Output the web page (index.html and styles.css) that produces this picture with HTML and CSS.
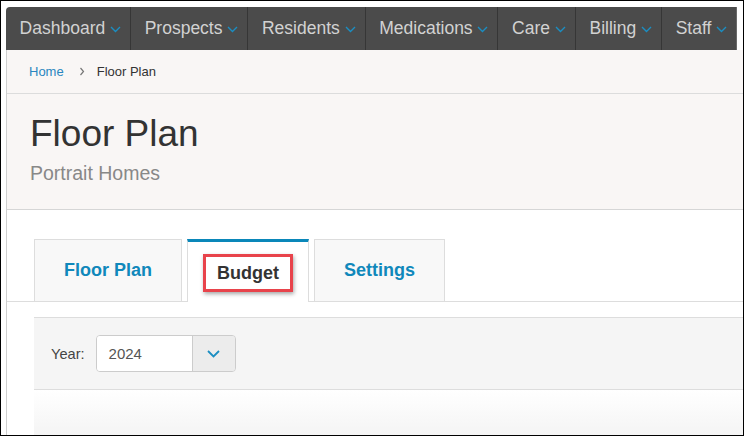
FILE: index.html
```html
<!DOCTYPE html>
<html>
<head>
    <meta charset="utf-8">
    <title>Floor Plan</title>
    <link rel="stylesheet" href="styles.css">
</head>
<body>
    <div class="tela">
        <ul class="menu">
            <li>Dashboard <svg class="seta" width="11" height="7" viewBox="0 0 11 7"><path d="M1 1l4.5 4.5L10 1"/></svg></li>
            <li>Prospects <svg class="seta" width="11" height="7" viewBox="0 0 11 7"><path d="M1 1l4.5 4.5L10 1"/></svg></li>
            <li>Residents <svg class="seta" width="11" height="7" viewBox="0 0 11 7"><path d="M1 1l4.5 4.5L10 1"/></svg></li>
            <li>Medications <svg class="seta" width="11" height="7" viewBox="0 0 11 7"><path d="M1 1l4.5 4.5L10 1"/></svg></li>
            <li>Care <svg class="seta" width="11" height="7" viewBox="0 0 11 7"><path d="M1 1l4.5 4.5L10 1"/></svg></li>
            <li>Billing <svg class="seta" width="11" height="7" viewBox="0 0 11 7"><path d="M1 1l4.5 4.5L10 1"/></svg></li>
            <li>Staff <svg class="seta" width="11" height="7" viewBox="0 0 11 7"><path d="M1 1l4.5 4.5L10 1"/></svg></li>
        </ul>

        <div class="pagina">
            <div class="trilha">
                <a class="trilha-link">Home</a>
                <svg class="trilha-seta" width="6" height="9" viewBox="0 0 6 9"><path d="M1.5 1l3 3.5-3 3.5"/></svg>
                <span>Floor Plan</span>
            </div>

            <div class="cabecalho">
                <h1 class="titulo">Floor Plan</h1>
                <div class="subtitulo">Portrait Homes</div>
            </div>

            <ul class="abas">
                <li class="aba">Floor Plan</li>
                <li class="aba ativa"><span class="destaque">Budget</span></li>
                <li class="aba">Settings</li>
            </ul>

            <div class="filtro">
                <label class="filtro-rotulo">Year:</label>
                <div class="seletor">
                    <span class="seletor-valor">2024</span>
                    <span class="seletor-botao"><svg width="13" height="8" viewBox="0 0 13 8"><path d="M1 1l5.5 5.5L12 1"/></svg></span>
                </div>
            </div>

            <div class="conteudo"></div>
        </div>
    </div>
</body>
</html>
```

FILE: styles.css
```css
* {
    box-sizing: border-box;
}

body {
    margin: 0;
    font-family: "Liberation Sans", Arial, sans-serif;
}

.tela {
    width: 744px;
    height: 436px;
    border: 1px solid #000;
    padding: 6px 0 0 5px;
    overflow: hidden;
    background-color: #fff;
}

/* menu principal */
.menu {
    display: flex;
    width: 731px;
    height: 43px;
    margin: 0;
    padding: 0;
    list-style: none;
    background-color: #4b4b4b;
    border-radius: 4px 0 0 0;
}

.menu li {
    display: flex;
    align-items: center;
    padding: 0 9px 0 13.6px;
    font-size: 17.5px;
    color: #d2d2d2;
    border-right: 1px solid #363636;
    white-space: pre;
}

.menu li:last-child {
    border-right-color: #6a6a6a;
}

.seta {
    margin: 2px 0 0 0;
    fill: none;
    stroke: #1b8ec2;
    stroke-width: 1.4;
}

/* pagina */
.pagina {
    border-left: 1px solid #cfcfcf;
}

.trilha {
    display: flex;
    align-items: center;
    height: 44px;
    padding-left: 22px;
    font-size: 13px;
    color: #333;
    background-color: #f9f6f5;
    border-bottom: 1px solid #dcdcdc;
}

.trilha-link {
    color: #2a86c0;
}

.trilha-seta {
    margin: 0 12px 0 15px;
    fill: none;
    stroke: #777;
    stroke-width: 1.2;
}

.cabecalho {
    height: 116px;
    padding: 19px 0 0 23px;
    background-color: #f9f6f5;
    border-bottom: 1px solid #d6d6d6;
}

.titulo {
    margin: 0;
    font-size: 37px;
    line-height: 42px;
    font-weight: 400;
    color: #333;
}

.subtitulo {
    margin-top: 6px;
    font-size: 19.5px;
    line-height: 24px;
    color: #888;
}

/* abas */
.abas {
    display: flex;
    align-items: flex-end;
    gap: 5px;
    margin: 29px 0 0;
    padding: 0 0 0 27px;
    list-style: none;
    border-bottom: 1px solid #ddd;
}

.aba {
    display: flex;
    align-items: center;
    height: 62px;
    padding: 0 29px;
    font-size: 18px;
    font-weight: 700;
    color: #1088bb;
    background-color: #f8f8f8;
    border: 1px solid #ddd;
    border-bottom: 0;
}

.aba.ativa {
    height: 63px;
    margin-bottom: -1px;
    padding-top: 2px;
    color: #333;
    background-color: #fff;
    border-top: 3px solid #0a87b9;
}

.destaque {
    margin: 0 -14px;
    padding: 6px 11px;
    line-height: 20px;
    border: 3px solid #e8434b;
    box-shadow: 1px 2px 4px rgba(0, 0, 0, .35);
}

/* filtro */
.filtro {
    display: flex;
    align-items: center;
    height: 73px;
    margin: 15px 0 0 27px;
    padding-left: 17px;
    background-color: #f5f5f5;
    border-top: 1px solid #ddd;
    border-bottom: 1px solid #ddd;
}

.filtro-rotulo {
    margin-right: 11px;
    font-size: 14.6px;
    color: #444;
}

.seletor {
    display: flex;
    width: 140px;
    height: 37px;
    border: 1px solid #ccc;
    border-radius: 4px;
    overflow: hidden;
}

.seletor-valor {
    display: flex;
    align-items: center;
    flex-grow: 1;
    padding-left: 12px;
    font-size: 15px;
    color: #555;
    background-color: #fff;
}

.seletor-botao {
    display: flex;
    align-items: center;
    justify-content: center;
    width: 43px;
    background-color: #ececec;
    border-left: 1px solid #ccc;
}

.seletor-botao svg {
    fill: none;
    stroke: #1b8ec2;
    stroke-width: 1.8;
}

.conteudo {
    height: 60px;
    margin-left: 27px;
    background: linear-gradient(#fff, #f1f1f1);
}
```
